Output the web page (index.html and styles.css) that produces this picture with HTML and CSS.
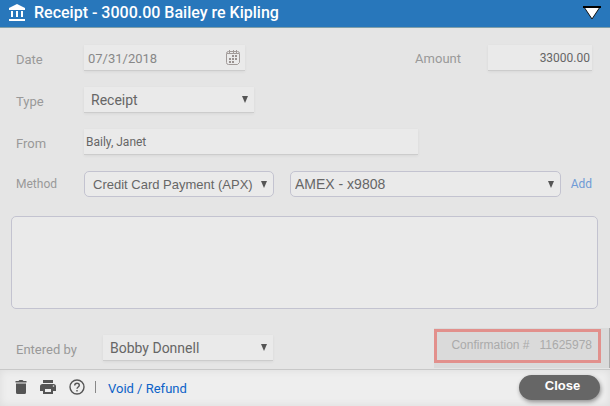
FILE: index.html
```html
<!DOCTYPE html>
<html lang="en">

<head>
  <meta charset="UTF-8">
  <title>Receipt</title>
  <link rel="stylesheet" href="styles.css">
</head>

<body>

  <header class="title-bar">
    <svg class="bank-icon" viewBox="0 0 18 18" width="18" height="18" fill="#fff" aria-hidden="true">
      <path d="M9 0 17 4V6H1V4zM3 7h2v6H3zM8 7h2v6H8zM13 7h2v6h-2zM1 15h16v2H1z" />
    </svg>
    <h1>Receipt - 3000.00 Bailey re Kipling</h1>
    <button class="collapse" type="button" aria-label="Collapse">
      <svg viewBox="0 0 20 16" width="20" height="16">
        <path d="M2 2 10 14 18 2z" fill="#fff" stroke="#111" stroke-width="1" />
        <path d="M1 1H19V3H1z" fill="#000" />
      </svg>
    </button>
  </header>

  <form id="receiptForm" class="receipt">
    <div class="row">
      <label for="date">Date</label>
      <div class="date-wrapper">
        <input type="text" id="date" class="field" value="07/31/2018">
        <svg class="calendar-icon" viewBox="0 0 14 15" width="14" height="15" aria-hidden="true">
          <path d="M2.5 1.500h9q2 0 2 2v9l-2 2h-9q-2 0-2-2v-9q0-2 2-2z" fill="none" stroke="#a19a98" />
          <path d="M1 3h12v1H1zM3 0h1v3H3zM7 0h1v3H7zM10 0h1v3h-1z" fill="#a19a98" />
          <path d="M6 5h2v2H6zM9 5h2v2H9zM3 8h2v2H3zM6 8h2v2H6zM9 8h2v2H9zM3 11h2v2H3zM6 11h2v2H6z" fill="#99918f" />
        </svg>
      </div>
      <label class="amount-label" for="amount">Amount</label>
      <input type="text" id="amount" class="field amount" value="33000.00">
    </div>

    <div class="row">
      <label for="type">Type</label>
      <select id="type" class="field type">
        <option>Receipt</option>
      </select>
    </div>

    <div class="row">
      <label for="from">From</label>
      <input type="text" id="from" class="field from" value="Baily, Janet">
    </div>

    <div class="row">
      <label class="method-label" for="method">Method</label>
      <select id="method" class="outlined method">
        <option>Credit Card Payment (APX)</option>
      </select>
      <select class="outlined card" aria-label="Card">
        <option>AMEX - x9808</option>
      </select>
      <a class="add" href="#">Add</a>
    </div>

    <textarea class="notes" aria-label="Notes"></textarea>

    <div class="entered">
      <label for="enteredBy">Entered by</label>
      <select id="enteredBy" class="field entered-by">
        <option>Bobby Donnell</option>
      </select>
      <div class="confirmation">
        <p><span>Confirmation #</span><span>11625978</span></p>
      </div>
    </div>
  </form>

  <footer class="actions">
    <button class="icon" type="button" aria-label="Delete">
      <svg viewBox="0 0 12 14" width="12" height="14" fill="#555">
        <path d="M1 3.500h10V12.500q0 1.500-1.500 1.500h-7Q1 14 1 12.500zM0.500 1h3L4.500 0h3l1 1h3v1.500h-11z" />
      </svg>
    </button>
    <button class="icon" type="button" aria-label="Print">
      <svg viewBox="0 0 16 14" width="16" height="14">
        <path d="M3 0h10v3H3zM2.500 4h11Q16 4 16 6.500V11h-3V8H3v3H0V6.500Q0 4 2.500 4zM3 8h10v6H3z" fill="#555" />
        <circle cx="13.500" cy="6" r=".8" fill="#eee" />
        <path d="M5 9h6v3H5z" fill="#eee" />
      </svg>
    </button>
    <button class="icon" type="button" aria-label="Help">
      <svg viewBox="0 0 16 16" width="16" height="16" fill="none" stroke="#555" stroke-width="1.400">
        <circle cx="8" cy="8" r="7" />
        <path d="M5.700 6.500Q5.700 4.200 8 4.200T10.300 6.300C10.300 8 8 8 8 9.800M8 11v1.500" />
      </svg>
    </button>
    <span class="divider"></span>
    <a class="void" href="#">Void / Refund</a>
    <button class="close" type="submit" form="receiptForm">Close</button>
  </footer>

</body>

</html>
```

FILE: styles.css
```css
* {
  box-sizing: border-box;
}

body {
  display: flex;
  flex-direction: column;
  min-height: 100vh;
  margin: 0;
  background-color: #e5e5e5;
  font-family: Roboto, "Liberation Sans", sans-serif;
  font-size: 13px;
  color: #666;
}

input,
select,
button,
textarea {
  font-family: inherit;
  color: inherit;
}

button {
  padding: 0;
  border: 0;
  background: none;
  cursor: pointer;
}

a {
  text-decoration: none;
}

.title-bar {
  display: flex;
  align-items: center;
  height: 28px;
  padding: 0 8px 2px;
  border-bottom: 1px solid #7f9fa9;
  background-color: #2877bb;
  color: #fff;
}

.title-bar h1 {
  flex: 1;
  margin: 0 0 0 8px;
  font-size: 16px;
  font-weight: 500;
  line-height: 24px;
}

.bank-icon,
.collapse svg,
.icon svg {
  display: block;
}

.receipt {
  flex: 1;
  padding-top: 17px;
}

.row {
  display: flex;
  align-items: center;
  height: 26px;
  margin: 0 18px 16px 16px;
}

label {
  width: 68px;
  padding-top: 3px;
  color: #999;
}

.method-label {
  padding-top: 0;
  font-size: 12px;
}

.field {
  height: 26px;
  border: 0;
  border-bottom: 1px solid #ccc;
  border-radius: 0;
  background-color: #eaeaea;
  box-shadow: 0 1px 3px rgba(0, 0, 0, 0.06);
}

select {
  appearance: none;
  padding: 0 7px;
  background-image: url("data:image/svg+xml,%3Csvg xmlns='http://www.w3.org/2000/svg' width='6' height='7'%3E%3Cpath d='M0 0h6L3 7z' fill='%23555'/%3E%3C/svg%3E");
  background-repeat: no-repeat;
  background-position: right 6px center;
}

.date-wrapper {
  position: relative;
}

#date {
  display: block;
  width: 161px;
  padding: 2px 4px 0;
  font-size: 13px;
  color: #888;
}

.calendar-icon {
  position: absolute;
  top: 5px;
  right: 5px;
}

.amount-label {
  width: auto;
  margin-left: auto;
  padding-top: 0;
}

.amount {
  width: 104px;
  margin-left: 27px;
  padding: 0 2px;
  font-size: 12px;
  text-align: right;
}

.type {
  width: 170px;
  font-size: 14px;
}

.from {
  width: 334px;
  padding: 0 2px;
  font-size: 12px;
}

.outlined {
  height: 26px;
  border: 1px solid #c3c3d0;
  border-radius: 5px;
  background-color: #eaeaea;
  font-family: "Liberation Sans", Arial, sans-serif;
}

.method {
  width: 190px;
  padding: 0 8px;
  font-size: 13px;
}

.card {
  flex: 1;
  margin-left: 16px;
  padding: 0 4px;
  font-size: 14px;
}

.add {
  margin-left: 10px;
  font-size: 12px;
  color: #6f9bd6;
}

.notes {
  display: block;
  width: calc(100% - 23px);
  height: 93px;
  margin: 19px 12px 19px 11px;
  border: 1px solid #c3c3d0;
  border-radius: 5px;
  background-color: #eaeaea;
  resize: none;
}

.entered {
  display: flex;
  align-items: center;
  padding-left: 16px;
}

.entered label {
  width: 87px;
}

.entered-by {
  width: 170px;
  font-size: 14px;
}

.confirmation {
  margin-left: auto;
  padding: 1px 8px 5px 0;
  border-right: 1px solid #aaa;
  background-color: #dadada;
}

.confirmation p {
  display: flex;
  gap: 10px;
  margin: 0;
  padding: 6px 6px 8px 14px;
  border: 3px solid #e2908c;
  font-family: "Liberation Sans", Arial, sans-serif;
  font-size: 12px;
  line-height: 14px;
  color: #aaa;
}

.actions {
  display: flex;
  align-items: center;
  height: 37px;
  padding: 0 10px 2px 15px;
  border-top: 1px solid #c8c8c8;
  background-color: #eee;
  box-shadow: inset 0 0 8px rgba(0, 0, 0, 0.08);
}

.icon {
  margin-right: 13px;
}

.divider {
  width: 1px;
  height: 12px;
  margin-right: 12px;
  margin-left: -3px;
  background-color: #888;
}

.void {
  padding-top: 2px;
  font-size: 13px;
  color: #0b62c8;
}

.close {
  width: 81px;
  height: 25px;
  margin-left: auto;
  padding: 0 0 4px 6px;
  border-radius: 13px;
  background-color: #666;
  box-shadow: 1px 2px 4px rgba(0, 0, 0, 0.4);
  font-family: "Liberation Sans", Arial, sans-serif;
  font-size: 13px;
  font-weight: bold;
  color: #fff;
}
```
